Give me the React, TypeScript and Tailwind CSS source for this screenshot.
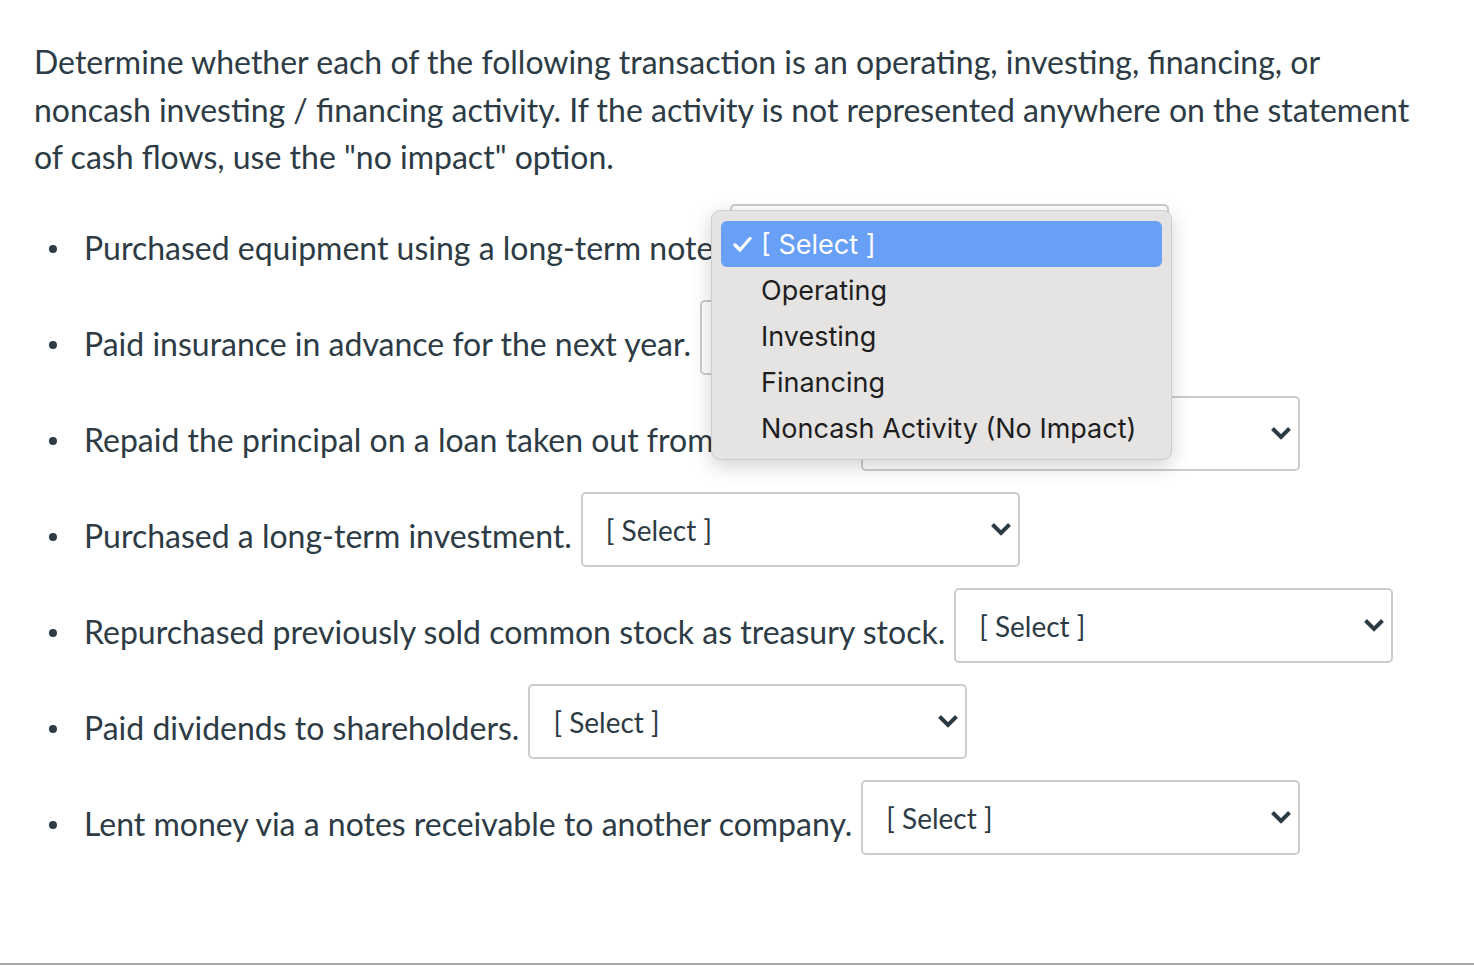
import React from "react";

const items: string[] = [
  "Purchased equipment using a long-term note.",
  "Paid insurance in advance for the next year.",
  "Repaid the principal on a loan taken out from the bank.",
  "Purchased a long-term investment.",
  "Repurchased previously sold common stock as treasury stock.",
  "Paid dividends to shareholders.",
  "Lent money via a notes receivable to another company.",
];

function Chevron() {
  return (
    <svg width="22" height="14" viewBox="0 0 22 14" className="shrink-0">
      <path d="M2.5 2.5 L11 11 L19.5 2.5" fill="none" stroke="#2d3b45" strokeWidth="4" strokeLinecap="butt" strokeLinejoin="miter" />
    </svg>
  );
}

function SelectBox() {
  return (
    <div className="mt-[4px] ml-[9px] flex h-[75px] w-[439px] shrink-0 items-center justify-between rounded-[5px] border-2 border-[#c9cdd0] bg-white pl-[23px] pr-[6px]">
      <span className="text-[28px] leading-none text-[#2d3b45] mt-[1px]">[ Select ]</span>
      <Chevron />
    </div>
  );
}

export default function App() {
  return (
    <div
      className="relative flex min-h-[966px] w-full flex-col bg-white text-[#2d3b45]"
      style={{ fontFamily: "Lato, 'Liberation Sans', sans-serif" }}
    >
      <div className="flex-1 pl-[34px] pr-[30px] pt-[38px]">
        <p className="whitespace-nowrap text-[32px] leading-[47.5px]">
          Determine whether each of the following transaction is an operating, investing, financing, or
          <br />
          noncash investing / financing activity. If the activity is not represented anywhere on the statement
          <br />
          of cash flows, use the "no impact" option.
        </p>
        <ul className="mt-[19px]">
          {items.map((t, i) => (
            <li key={i} className="flex h-[96px] items-start">
              <span className="mt-[45px] ml-[15px] mr-[27px] h-[8px] w-[8px] shrink-0 rounded-full bg-[#2d3b45]" />
              <span className="whitespace-nowrap text-[32px] leading-[96px]">{t}</span>
              <SelectBox />
            </li>
          ))}
        </ul>
      </div>
      <div className="h-[2px] w-full bg-[#a9a9a9] mb-[1px]" />

      {/* open dropdown menu overlay */}
      <div
        className="absolute left-[711px] top-[210px] w-[461px] h-[250px] rounded-[9px] border border-[#cfcdcb] bg-[#e5e4e3] px-[9px] pt-[10px] shadow-[0_6px_20px_rgba(0,0,0,0.18)]"
        style={{ fontFamily: "Inter, 'Noto Sans', sans-serif" }}
      >
        <div className="flex h-[46px] items-center rounded-[6px] bg-[#68a0f8] text-white">
          <span className="flex w-[40px] justify-center pl-[2px]">
            <svg width="19" height="15" viewBox="0 0 19 15">
              <path d="M2 8 L7 13 L17 1.5" fill="none" stroke="#ffffff" strokeWidth="3.2" strokeLinecap="round" strokeLinejoin="round" />
            </svg>
          </span>
          <span className="text-[27px] leading-none">[ Select ]</span>
        </div>
        {["Operating", "Investing", "Financing", "Noncash Activity (No Impact)"].map((o) => (
          <div key={o} className="flex h-[46px] items-center pl-[40px] text-[27px] leading-none text-[#1e1e1e]">
            {o}
          </div>
        ))}
      </div>
    </div>
  );
}
